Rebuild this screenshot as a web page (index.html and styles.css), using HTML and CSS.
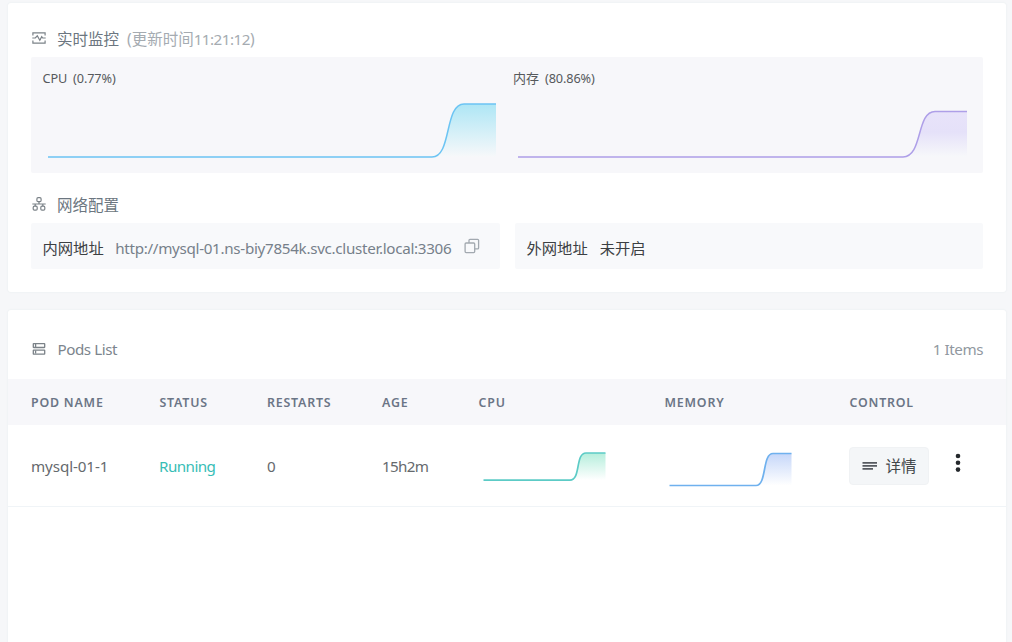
FILE: index.html
```html
<!DOCTYPE html>
<html lang="zh">
<head>
<meta charset="utf-8">
<title>mysql-01</title>
<link rel="stylesheet" href="styles.css">
</head>
<body>
<main class="page">
  <section class="card overview">
    <header class="heading monitor-heading">
      <svg class="icon" viewBox="0 0 14 14" fill="none" stroke="currentColor" stroke-width="1.2"><path d="M.9 4.600V1.800h12.200v2.800M.9 9.400v2.800h12.200V9.400M.3 7h3l2-2.200 2.500 4.400L9.700 5.600l1 1.400h3"/></svg>
      <h2>实时监控</h2>
      <span class="updated">(更新时间<span class="lat time">11:21:12</span>)</span>
    </header>
    <div class="charts">
      <div class="chart">
        <div class="chart-title"><span class="lat">CPU</span><span class="lat">(0.77%)</span></div>
        <svg class="plot" width="458" height="66" viewBox="0 0 458 66" fill="none">
          <defs><linearGradient id="g1" x1="0" y1="0" x2="0" y2="1"><stop stop-color="#aee6f5"/><stop offset="1" stop-color="#f7f8fa"/></linearGradient></defs>
          <path d="M390.500 59C410 59 402 6 422 6H454V59Z" fill="url(#g1)"/>
          <path d="M6 59H390C410 59 402 6 422 6H454" stroke="#6cc4f3" stroke-width="1.500"/>
        </svg>
      </div>
      <div class="chart">
        <div class="chart-title"><span>内存</span><span class="lat">(80.86%)</span></div>
        <svg class="plot" width="458" height="66" viewBox="0 0 458 66" fill="none">
          <defs><linearGradient id="g2" x1="0" y1="0" x2="0" y2="1"><stop stop-color="#e8e3fa"/><stop offset=".45" stop-color="#e5e1f9"/><stop offset="1" stop-color="#f7f8fa"/></linearGradient></defs>
          <path d="M390 59C410 59 403 13.500 422 13.500H454V59Z" fill="url(#g2)"/>
          <path d="M5 59H390C410 59 403 13.500 422 13.500H454" stroke="#ae9fe8" stroke-width="1.500"/>
        </svg>
      </div>
    </div>
    <header class="heading network-heading">
      <svg class="icon" viewBox="0 0 14 14" fill="none" stroke="currentColor" stroke-width="1.200"><rect x="4.900" y=".7" width="4.200" height="4" rx="1.200"/><rect x="1.200" y="9.200" width="4" height="4" rx="1.200"/><rect x="8.800" y="9.200" width="4" height="4" rx="1.200"/><path d="M7 4.700V7M.3 7h13.400M3.200 7v2.200M10.800 7v2.200"/></svg>
      <h2>网络配置</h2>
    </header>
    <div class="addresses">
      <div class="address">
        <span class="label">内网地址</span>
        <span class="lat url">http://mysql-01.ns-biy7854k.svc.cluster.local:3306</span>
        <svg class="copy" viewBox="0 0 16 16" fill="none" stroke="currentColor" stroke-width="1.300"><rect x="1.100" y="5" width="9.600" height="9.600" rx="1"/><path d="M5 5V2.300q0-1 1-1h7.600q1 0 1 1v7.600q0 1-1 1h-2.900"/></svg>
      </div>
      <div class="address">
        <span class="label">外网地址</span>
        <span class="label">未开启</span>
      </div>
    </div>
  </section>

  <section class="card pods">
    <header class="heading pods-heading">
      <svg class="icon" viewBox="0 0 14 14" fill="none" stroke="currentColor" stroke-width="1.300"><rect x="1.300" y="1.600" width="11.400" height="3.900" rx=".4"/><rect x="1.300" y="8.200" width="11.400" height="3.900" rx=".4"/><path d="M3.600 2v3M3.600 8.600v3"/></svg>
      <h2 class="lat pods-title">Pods List</h2>
      <span class="lat count">1 Items</span>
    </header>
    <div class="row thead">
      <b>POD NAME</b><b>STATUS</b><b>RESTARTS</b><b>AGE</b><b>CPU</b><b>MEMORY</b><b>CONTROL</b>
    </div>
    <div class="row item">
      <span class="lat name">mysql-01-1</span>
      <span class="lat running">Running</span>
      <span class="lat">0</span>
      <span class="lat age">15h2m</span>
      <svg class="spark" width="134" height="50" viewBox="0 0 134 50" fill="none">
        <defs><linearGradient id="g3" x1="0" y1="0" x2="0" y2="1"><stop stop-color="#b5eedc"/><stop offset="1" stop-color="#fff"/></linearGradient></defs>
        <path d="M92 38C103 38 97 11 108 11H127.500V38Z" fill="url(#g3)"/>
        <path d="M5.500 38.200H92C103 38.200 97 11 108 11H127.500" stroke="#5ccbc6" stroke-width="1.700"/>
      </svg>
      <svg class="spark" width="134" height="50" viewBox="0 0 134 50" fill="none">
        <defs><linearGradient id="g4" x1="0" y1="0" x2="0" y2="1"><stop stop-color="#c6d7f9"/><stop offset="1" stop-color="#fff"/></linearGradient></defs>
        <path d="M92 43.500C103 43.500 98 11.500 109 11.500H127.500V43.500Z" fill="url(#g4)"/>
        <path d="M5.500 43.500H92C103 43.500 98 11.500 109 11.500H127.500" stroke="#6fb1ee" stroke-width="1.700"/>
      </svg>
      <div class="control">
        <button class="detail"><svg width="16" height="10" viewBox="0 0 16 10" fill="none" stroke="#565a60" stroke-width="1.700"><path d="M.5 1.800h15M.5 4.800h15M.5 7.800h10.500"/></svg><span>详情</span></button>
        <svg class="more" width="6" height="20" viewBox="0 0 6 20" fill="#24282c"><circle cx="3" cy="3" r="2.300"/><circle cx="3" cy="9.800" r="2.300"/><circle cx="3" cy="16.600" r="2.300"/></svg>
      </div>
    </div>
  </section>
</main>
</body>
</html>
```
FILE: styles.css
```css
* { box-sizing: border-box; }
body {
  margin: 0;
  background: #f6f7f9;
  color: #5a646e;
  font: 15.5px/20px "Noto Sans", "Noto Sans CJK SC", sans-serif;
  overflow: hidden;
}
.page { height: 642px; padding: 3px 6px 0 8px; display: flex; flex-direction: column; gap: 18px; overflow: hidden; }
.card { background: #fff; border-radius: 3px; box-shadow: 0 0 1px 1px #f1f3f5; }
.overview { height: 289px; padding: 25px 23px 0; flex: none; }
.pods { height: 360px; flex: none; }
.lat { font-size: 15.2px; letter-spacing: -.45px; white-space: nowrap; }
.heading { display: flex; align-items: center; height: 22px; color: #6c7680; }
.heading h2 { margin: 0 0 0 11px; font-size: 15.5px; font-weight: 400; }
.heading h2.lat { font-size: 15.2px; margin-left: 11.5px; }
.icon { width: 14px; height: 14px; margin: -2px 0 0 1px; color: #7b8288; }
.monitor-heading h2, .updated { margin-top: -1px; }
.updated { margin-left: 8px; color: #a5abb1; }
.time { letter-spacing: -.5px; }
.charts { margin-top: 7px; height: 116px; background: #f7f7fa; border-radius: 2px; padding: 11px 0 0 11.5px; display: grid; grid-template-columns: 470.5px 1fr; }
.chart-title { display: flex; gap: 6px; height: 20px; font-size: 13px; color: #56595c; }
.chart-title .lat { font-size: 12.7px; letter-spacing: -.12px; }
.plot { display: block; margin-top: 10px; }
.chart:first-child .plot { margin-left: -.5px; }
.network-heading { margin-top: 21px; }
.addresses { margin-top: 7px; display: grid; grid-template-columns: 469px 468px; gap: 15px; }
.address { display: flex; align-items: center; gap: 12px; height: 46px; padding: 3px 11.5px 0; background: #f8f9fb; border-radius: 2px; }
.label { font-size: 15.3px; color: #3c4043; }
.url { color: #76808a; letter-spacing: -.3px; margin-left: -.5px; }
.copy { width: 16px; height: 16px; color: #a2a9b0; margin: -3px 0 0 .5px; }
.pods-heading { height: 69px; padding: 9px 23px 0; }
.pods-heading .icon { margin-top: -1px; }
.pods-title { color: #7c858d; }
.count { margin-left: auto; color: #9198a0; }
.row { display: grid; grid-template-columns: 128.500px 107.500px 115px 96.500px 186px 185px 1fr; align-items: center; padding-left: 23px; }
.thead { height: 46px; padding-top: 2px; background: #f7f7fa; color: #6b7586; }
.thead b { font-size: 12.4px; font-weight: 600; letter-spacing: .8px; white-space: nowrap; }
.item { height: 82px; border-bottom: 1px solid #f0f4f7; color: #65696d; }
.item .name { letter-spacing: -.1px; }
.item .running { color: #37bdb6; letter-spacing: -.55px; margin-left: -.5px; }
.item .age { letter-spacing: -.7px; }
.spark { margin: 2px 0 0 -1px; }
.control { display: flex; align-items: center; gap: 25.500px; margin-left: -.5px; }
.detail { width: 80px; height: 38px; border: 1px solid #f0f2f4; border-radius: 4px; background: #f4f6f8; display: flex; align-items: center; padding: 0 11.500px; gap: 8px; color: #42464a; font: 15.5px "Noto Sans CJK SC", sans-serif; white-space: nowrap; }
.detail span { margin-top: -1px; }
.more { margin-top: -5px; }
```
